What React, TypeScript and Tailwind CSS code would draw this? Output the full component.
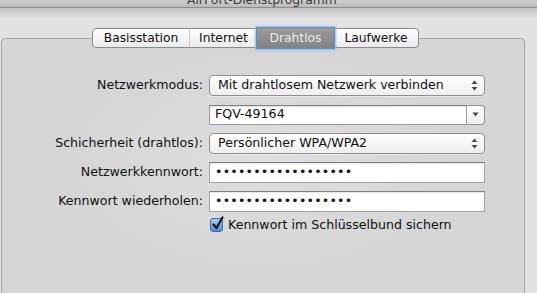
import React from "react";

function PopupArrows() {
  return (
    <svg width="7" height="11" viewBox="0 0 7 11" className="shrink-0">
      <path d="M3.5 0.5 L6.5 4 L0.5 4 Z" fill="#4a4a4a" />
      <path d="M3.5 10.5 L6.5 7 L0.5 7 Z" fill="#4a4a4a" />
    </svg>
  );
}

function Popup({ text }: { text: string }) {
  return (
    <div className="flex h-[21px] w-[276px] items-center justify-between rounded-[4px] border border-[#8f8f8f] bg-gradient-to-b from-white to-[#eeeeee] pl-[8px] pr-[6px] shadow-[0_1px_0_rgba(255,255,255,0.45)]">
      <span className="leading-none">{text}</span>
      <PopupArrows />
    </div>
  );
}

function Combo({ text }: { text: string }) {
  return (
    <div className="flex h-[20px] w-[276px]">
      <div className="flex flex-1 items-center border border-[#9a9a9a] border-t-[#7f7f7f] bg-white pl-[5px] shadow-[inset_0_1px_1px_rgba(0,0,0,0.12)]">
        <span className="leading-none">{text}</span>
      </div>
      <div className="flex w-[18px] items-center justify-center rounded-r-[4px] border border-l-0 border-[#8f8f8f] bg-gradient-to-b from-white to-[#eeeeee]">
        <svg width="7" height="5" viewBox="0 0 7 5">
          <path d="M0.5 0.5 L6.5 0.5 L3.5 4.5 Z" fill="#4a4a4a" />
        </svg>
      </div>
    </div>
  );
}

function Password() {
  return (
    <div className="flex h-[21px] w-[276px] items-center border border-[#a2a2a2] border-t-[#808080] bg-white pl-[5px] shadow-[inset_0_1px_1px_rgba(0,0,0,0.1)]">
      <span className="leading-none tracking-[0.2px]">••••••••••••••••••</span>
    </div>
  );
}

function Row({ label, children }: { label: string; children: React.ReactNode }) {
  return (
    <div className="flex h-[21px] items-center">
      <div className="w-[201px] text-right leading-none">{label}</div>
      <div className="ml-[6px] flex items-center">{children}</div>
    </div>
  );
}

export default function App() {
  const tabs = [
    { name: "Basisstation", w: "w-[96px]" },
    { name: "Internet", w: "w-[68px]" },
    { name: "Drahtlos", w: "w-[77px]", sel: true },
    { name: "Laufwerke", w: "w-[84px]" },
  ];
  return (
    <div className="relative h-[293px] w-[537px] overflow-hidden bg-[#e2e2e2] font-['DejaVu_Sans',sans-serif] text-[12.6px] text-[#111]">
      {/* title bar */}
      <div className="h-[8px] overflow-hidden border-b border-[#8c8c8c] bg-gradient-to-b from-[#cfcfcf] to-[#bbbbbb] pl-[187px]">
        <div className="mt-[-6px] text-[12.3px] leading-[13px] text-[#3c3c3c]">AirPort-Dienstprogramm</div>
      </div>
      <div className="h-[10px] bg-gradient-to-b from-[#c3c3c3] to-[#e2e2e2]" />

      {/* tab box */}
      <div className="ml-[1px] mt-[20px] h-[270px] w-[524px] rounded-[4px] border border-[#a6a6a6] bg-[#d6d6d6] bg-[radial-gradient(ellipse_at_50%_45%,#dfdfdf_0%,#d6d6d6_50%)]">
        <div className="-mt-[11px] flex pl-[90px]">
          <div className="flex h-[20px] rounded-[4px] border border-[#8a8a8a] bg-gradient-to-b from-white to-[#ebebeb] text-[12.3px]">
            {tabs.map((t, i) => (
              <div
                key={t.name}
                className={
                  t.sel
                    ? `${t.w} relative z-10 -my-px flex items-center justify-center bg-gradient-to-b from-[#9b9b9b] to-[#838383] text-[#ececec] shadow-[0_0_0_1px_#5e8fc8,0_0_2px_2px_#8fbbe8]`
                    : `${t.w} flex items-center justify-center ${i === 1 ? "border-l border-[#c8c8c8]" : ""} ${i === 0 ? "rounded-l-[3px]" : ""} ${i === 3 ? "rounded-r-[3px]" : ""}`
                }
              >
                <span className="leading-none">{t.name}</span>
              </div>
            ))}
          </div>
        </div>

        <div className="mt-[27px] flex flex-col gap-[8px]">
          <Row label="Netzwerkmodus:">
            <Popup text="Mit drahtlosem Netzwerk verbinden" />
          </Row>
          <Row label="">
            <Combo text="FQV-49164" />
          </Row>
          <Row label="Schicherheit (drahtlos):">
            <Popup text="Persönlicher WPA/WPA2" />
          </Row>
          <Row label="Netzwerkkennwort:">
            <Password />
          </Row>
          <Row label="Kennwort wiederholen:">
            <Password />
          </Row>
        </div>

        <div className="mt-[6px] flex items-center pl-[208px]">
          <div className="relative h-[14px] w-[13px] rounded-[3px] border border-[#3f6aa6] bg-gradient-to-b from-[#a9cdf3] to-[#4b8bd8]">
            <svg width="14" height="16" viewBox="0 0 14 16" className="absolute left-[0px] top-[-4px]">
              <path d="M2.5 9.5 L5.5 13 L11.5 2.5" fill="none" stroke="#151515" strokeWidth="2.2" strokeLinecap="round" strokeLinejoin="round" />
            </svg>
          </div>
          <span className="ml-[5px] leading-none">Kennwort im Schlüsselbund sichern</span>
        </div>
      </div>
    </div>
  );
}
